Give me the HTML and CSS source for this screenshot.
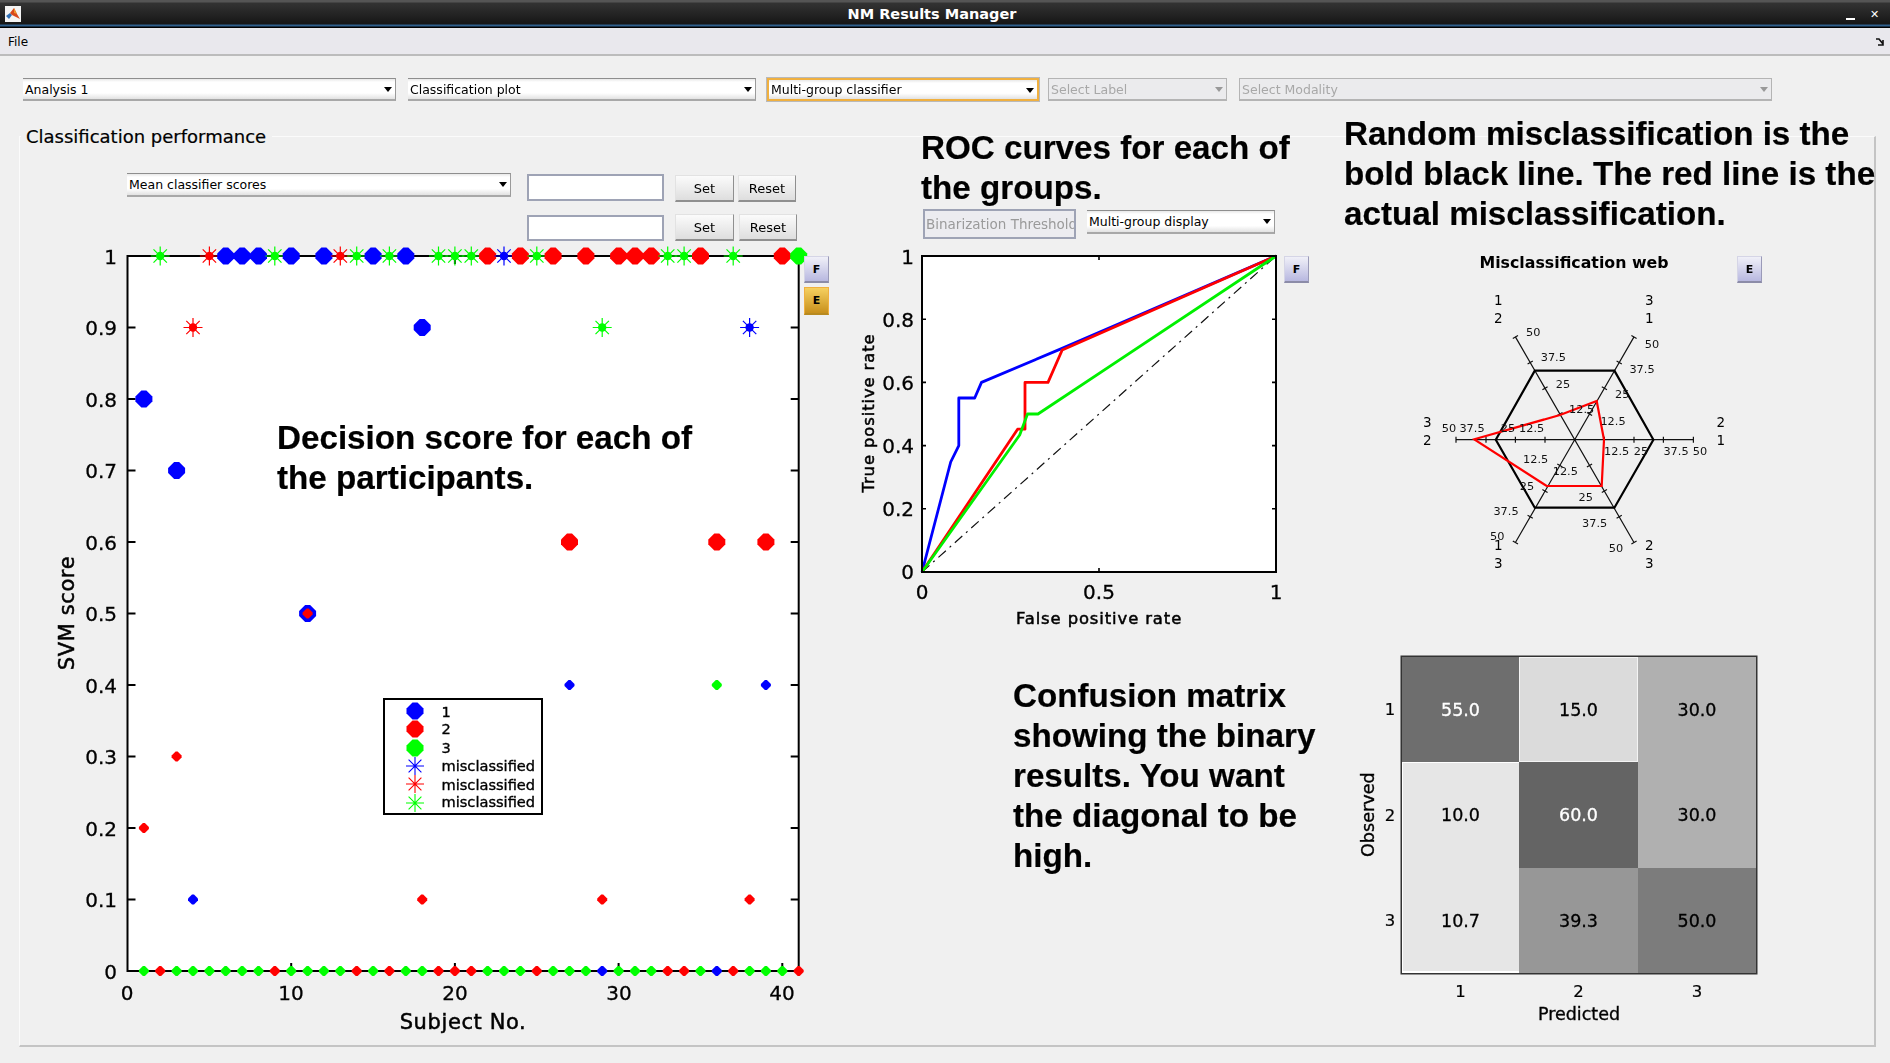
FILE: index.html
```html
<!DOCTYPE html>
<html lang="en">
<head>
    <meta charset="UTF-8">
    <meta name="viewport" content="width=device-width, initial-scale=1.0">
    <title>NM Results Manager</title>
    <link rel="stylesheet" href="styles.css">
</head>
<body>

    <div class="titlebar">
        <svg class="app-icon" width="16" height="16" viewBox="0 0 16 16">
            <rect width="16" height="16" fill="#f4f4f4"/>
            <polygon points="1,10 5,7 7,9 4,13" fill="#2f6fb5"/>
            <polygon points="5,7 9,2 12,8 15,13 11,11 7,9" fill="#d8491c"/>
            <polygon points="9,2 12,8 9,7" fill="#f0902a"/>
        </svg>
        <span class="titlebar-text">NM Results Manager</span>
        <span class="win-min"></span>
        <span class="win-close">&#x2715;</span>
    </div>

    <div class="menubar">
        <span>File</span>
        <svg class="undock" width="10" height="10" viewBox="0 0 10 10">
            <path d="M1 2 L4 2 L8 7 M8 3 L8 8 L3 8" fill="none" stroke="#111" stroke-width="1.6"/>
        </svg>
    </div>

    <div class="toolbar">
        <div class="combo w-analysis"><span>Analysis 1</span><i></i></div>
        <div class="combo w-plot"><span>Classification plot</span><i></i></div>
        <div class="combo w-multi focused"><span>Multi-group classifier</span><i></i></div>
        <div class="combo w-label disabled"><span>Select Label</span><i></i></div>
        <div class="combo w-modality disabled"><span>Select Modality</span><i></i></div>
    </div>

    <div class="panel">
        <div class="panel-title">Classification performance</div>

        <div class="note note-decision">Decision score for each of<br>the participants.</div>
        <div class="note note-roc">ROC curves for each of<br>the groups.</div>
        <div class="note note-random">Random misclassification is the<br>bold black line. The red line is the<br>actual misclassification.</div>
        <div class="note note-confusion">Confusion matrix<br>showing the binary<br>results. You want<br>the diagonal to be<br>high.</div>

        <!-- left column: scores -->
        <div class="col-scores">
            <div class="ctl-row">
                <div class="combo w-scores"><span>Mean classifier scores</span><i></i></div>
                <div class="field"></div>
                <button class="btn btn-set">Set</button>
                <button class="btn btn-reset">Reset</button>
            </div>
            <div class="ctl-row second">
                <div class="field field-b"></div>
                <button class="btn btn-set">Set</button>
                <button class="btn btn-reset">Reset</button>
            </div>
            <div class="plot-row">
                <svg class="plot" width="784" height="800" viewBox="20 245 784 800">
                    <defs>
                        <polygon id="big" points="-2.5,-8.5 2.5,-8.5 8.5,-2.5 8.5,2.5 2.5,8.5 -2.5,8.5 -8.5,2.5 -8.5,-2.5" fill="currentColor"/>
                        <polygon id="small" points="-1,-5 1,-5 5,-1 5,1 1,5 -1,5 -5,1 -5,-1" fill="currentColor"/>
                        <g id="star" stroke="currentColor" stroke-width="1.2">
                            <path d="M-9.5 0H9.5M0 -9.5V9.5M-6.7 -6.7L6.7 6.7M-6.7 6.7L6.7 -6.7"/>
                            <circle r="4.2" fill="currentColor" stroke="none"/>
                        </g>
                        <path id="star-thin" d="M-9 0H9M0 -9V9M-6.4 -6.4L6.4 6.4M-6.4 6.4L6.4 -6.4" stroke="currentColor" stroke-width="1.1"/>
                    </defs>

                    <rect x="127.5" y="256" width="671.2" height="715" fill="#fff"/>
                    <path class="axis" d="M127.5 256H798.7V971H127.5Z"/>
                    <path class="axis" d="M127.5 327.5h8M127.5 399h8M127.5 470.5h8M127.5 542h8M127.5 613.5h8M127.5 685h8M127.5 756.5h8M127.5 828h8M127.5 899.5h8"/>
                    <path class="axis" d="M798.7 327.5h-8M798.7 399h-8M798.7 470.5h-8M798.7 542h-8M798.7 613.5h-8M798.7 685h-8M798.7 756.5h-8M798.7 828h-8M798.7 899.5h-8"/>
                    <path class="axis" d="M291.2 971v-8M454.9 971v-8M618.6 971v-8M782.3 971v-8M291.2 256v8M454.9 256v8M618.6 256v8M782.3 256v8"/>

                    <g class="tick-y">
                        <text x="117" y="264">1</text>
                        <text x="117" y="335">0.9</text>
                        <text x="117" y="407">0.8</text>
                        <text x="117" y="478">0.7</text>
                        <text x="117" y="550">0.6</text>
                        <text x="117" y="621">0.5</text>
                        <text x="117" y="693">0.4</text>
                        <text x="117" y="764">0.3</text>
                        <text x="117" y="836">0.2</text>
                        <text x="117" y="907">0.1</text>
                        <text x="117" y="979">0</text>
                    </g>
                    <g class="tick-x">
                        <text x="127" y="1000">0</text>
                        <text x="291" y="1000">10</text>
                        <text x="455" y="1000">20</text>
                        <text x="619" y="1000">30</text>
                        <text x="782" y="1000">40</text>
                    </g>
                    <text class="axis-label" x="463" y="1029">Subject No.</text>
                    <text class="axis-label" transform="translate(74 613) rotate(-90)">SVM score</text>

                    <!-- score = 1 -->
                    <use href="#star" class="green" x="160.2" y="256"/>
                    <use href="#star" class="red" x="209.4" y="256"/>
                    <use href="#big" class="blue" x="225.7" y="256"/>
                    <use href="#big" class="blue" x="242.1" y="256"/>
                    <use href="#big" class="blue" x="258.5" y="256"/>
                    <use href="#star" class="green" x="274.8" y="256"/>
                    <use href="#big" class="blue" x="291.2" y="256"/>
                    <use href="#big" class="blue" x="323.9" y="256"/>
                    <use href="#star" class="red" x="340.3" y="256"/>
                    <use href="#star" class="green" x="356.7" y="256"/>
                    <use href="#big" class="blue" x="373.1" y="256"/>
                    <use href="#star" class="green" x="389.4" y="256"/>
                    <use href="#big" class="blue" x="405.8" y="256"/>
                    <use href="#star" class="green" x="438.5" y="256"/>
                    <use href="#star" class="green" x="454.9" y="256"/>
                    <use href="#star" class="green" x="471.3" y="256"/>
                    <use href="#big" class="red" x="487.6" y="256"/>
                    <use href="#star" class="blue" x="504" y="256"/>
                    <use href="#big" class="red" x="520.4" y="256"/>
                    <use href="#star" class="green" x="536.8" y="256"/>
                    <use href="#big" class="red" x="553.1" y="256"/>
                    <use href="#big" class="red" x="585.9" y="256"/>
                    <use href="#big" class="red" x="618.6" y="256"/>
                    <use href="#big" class="red" x="635" y="256"/>
                    <use href="#big" class="red" x="651.3" y="256"/>
                    <use href="#star" class="green" x="667.7" y="256"/>
                    <use href="#star" class="green" x="684.1" y="256"/>
                    <use href="#big" class="red" x="700.5" y="256"/>
                    <use href="#star" class="green" x="733.2" y="256"/>
                    <use href="#big" class="red" x="782.3" y="256"/>
                    <use href="#big" class="green" x="798.7" y="256"/>

                    <!-- scattered scores -->
                    <use href="#big" class="blue" x="143.9" y="399"/>
                    <use href="#big" class="blue" x="176.6" y="470.5"/>
                    <use href="#star" class="red" x="193" y="327.5"/>
                    <use href="#big" class="blue" x="422.2" y="327.5"/>
                    <use href="#star" class="green" x="602.2" y="327.5"/>
                    <use href="#star" class="blue" x="749.6" y="327.5"/>
                    <use href="#big" class="blue" x="307.6" y="613.5"/>
                    <use href="#small" class="red" x="307.6" y="613.5"/>
                    <use href="#big" class="red" x="569.5" y="542"/>
                    <use href="#big" class="red" x="716.8" y="542"/>
                    <use href="#big" class="red" x="765.9" y="542"/>
                    <use href="#small" class="blue" x="569.5" y="685"/>
                    <use href="#small" class="green" x="716.8" y="685"/>
                    <use href="#small" class="blue" x="765.9" y="685"/>
                    <use href="#small" class="red" x="176.6" y="756.5"/>
                    <use href="#small" class="red" x="143.9" y="828"/>
                    <use href="#small" class="blue" x="193" y="899.5"/>
                    <use href="#small" class="red" x="422.2" y="899.5"/>
                    <use href="#small" class="red" x="602.2" y="899.5"/>
                    <use href="#small" class="red" x="749.6" y="899.5"/>

                    <!-- score = 0 -->
                    <use href="#small" class="green" x="143.9" y="971"/>
                    <use href="#small" class="red" x="160.2" y="971"/>
                    <use href="#small" class="green" x="176.6" y="971"/>
                    <use href="#small" class="green" x="193" y="971"/>
                    <use href="#small" class="green" x="209.4" y="971"/>
                    <use href="#small" class="green" x="225.7" y="971"/>
                    <use href="#small" class="green" x="242.1" y="971"/>
                    <use href="#small" class="green" x="258.5" y="971"/>
                    <use href="#small" class="red" x="274.8" y="971"/>
                    <use href="#small" class="green" x="291.2" y="971"/>
                    <use href="#small" class="green" x="307.6" y="971"/>
                    <use href="#small" class="green" x="323.9" y="971"/>
                    <use href="#small" class="green" x="340.3" y="971"/>
                    <use href="#small" class="red" x="356.7" y="971"/>
                    <use href="#small" class="green" x="373.1" y="971"/>
                    <use href="#small" class="red" x="389.4" y="971"/>
                    <use href="#small" class="green" x="405.8" y="971"/>
                    <use href="#small" class="green" x="422.2" y="971"/>
                    <use href="#small" class="red" x="438.5" y="971"/>
                    <use href="#small" class="red" x="454.9" y="971"/>
                    <use href="#small" class="red" x="471.3" y="971"/>
                    <use href="#small" class="green" x="487.6" y="971"/>
                    <use href="#small" class="green" x="504" y="971"/>
                    <use href="#small" class="green" x="520.4" y="971"/>
                    <use href="#small" class="red" x="536.8" y="971"/>
                    <use href="#small" class="green" x="553.1" y="971"/>
                    <use href="#small" class="green" x="569.5" y="971"/>
                    <use href="#small" class="green" x="585.9" y="971"/>
                    <use href="#small" class="blue" x="602.2" y="971"/>
                    <use href="#small" class="green" x="618.6" y="971"/>
                    <use href="#small" class="green" x="635" y="971"/>
                    <use href="#small" class="green" x="651.3" y="971"/>
                    <use href="#small" class="red" x="667.7" y="971"/>
                    <use href="#small" class="red" x="684.1" y="971"/>
                    <use href="#small" class="green" x="700.5" y="971"/>
                    <use href="#small" class="blue" x="716.8" y="971"/>
                    <use href="#small" class="red" x="733.2" y="971"/>
                    <use href="#small" class="green" x="749.6" y="971"/>
                    <use href="#small" class="green" x="765.9" y="971"/>
                    <use href="#small" class="green" x="782.3" y="971"/>
                    <use href="#small" class="red" x="798.7" y="971"/>

                    <!-- legend -->
                    <rect class="legend-box" x="384" y="699" width="158" height="115"/>
                    <use href="#big" class="blue" x="415" y="711"/>
                    <use href="#big" class="red" x="415" y="729"/>
                    <use href="#big" class="green" x="415" y="748"/>
                    <use href="#star-thin" class="blue" x="415" y="766"/>
                    <use href="#star-thin" class="red" x="415" y="784"/>
                    <use href="#star-thin" class="green" x="415" y="803"/>
                    <g class="legend-text">
                        <text x="441.5" y="717">1</text>
                        <text x="441.5" y="734">2</text>
                        <text x="441.5" y="753">3</text>
                        <text x="441.5" y="771">misclassified</text>
                        <text x="441.5" y="790">misclassified</text>
                        <text x="441.5" y="807">misclassified</text>
                    </g>
                </svg>
                <div class="side-btns">
                    <button class="mini mini-f">F</button>
                    <button class="mini mini-e">E</button>
                </div>
            </div>
        </div>

        <!-- middle column: ROC -->
        <div class="col-roc">
            <div class="ctl-row roc-ctl">
                <div class="threshold"><span>Binarization Threshold</span></div>
                <div class="combo w-display"><span>Multi-group display</span><i></i></div>
            </div>
            <div class="plot-row">
                <svg class="plot" width="448" height="400" viewBox="836 240 448 400">
                    <rect x="922" y="256" width="354" height="316" fill="#fff"/>
                    <polyline class="roc-chance" points="922,572 1276,256"/>
                    <polyline class="roc roc-blue" points="922,572 950.7,462 958.8,445.6 958.8,398 974.7,398 981.5,382.4 1061.5,348.6 1276,256"/>
                    <polyline class="roc roc-red" points="922,572 1017.6,429.2 1025,429.2 1025,382.4 1048,382.4 1062.2,350 1276,256"/>
                    <polyline class="roc roc-green" points="922,572 1019.7,435 1027.5,414 1038,414 1276,256"/>
                    <path class="axis" d="M922 256H1276V572H922Z"/>
                    <path class="axis thin" d="M922 508.8h4M922 445.6h4M922 382.4h4M922 319.2h4M1276 508.8h-4M1276 445.6h-4M1276 382.4h-4M1276 319.2h-4M1099 572v-4M1099 256v4"/>
                    <g class="tick-y">
                        <text x="914" y="264">1</text>
                        <text x="914" y="327">0.8</text>
                        <text x="914" y="390">0.6</text>
                        <text x="914" y="453">0.4</text>
                        <text x="914" y="516">0.2</text>
                        <text x="914" y="579">0</text>
                    </g>
                    <g class="tick-x">
                        <text x="922" y="599">0</text>
                        <text x="1099" y="599">0.5</text>
                        <text x="1276" y="599">1</text>
                    </g>
                    <text class="axis-label small" x="1099" y="624">False positive rate</text>
                    <text class="axis-label small" transform="translate(874 413) rotate(-90)">True positive rate</text>
                </svg>
                <div class="side-btns roc-btns">
                    <button class="mini mini-f">F</button>
                </div>
            </div>
        </div>

        <!-- right column: web and confusion matrix -->
        <div class="col-web">
            <div class="web-head">
                <div class="web-title">Misclassification web</div>
                <button class="mini mini-f">E</button>
            </div>
            <svg class="plot" width="530" height="296" viewBox="1340 284 530 296">
                <g class="web-axes">
                    <path d="M1456 439.7H1693.4M1515.4 336.9L1634 542.5M1634 336.9L1515.4 542.5"/>
                    <path d="M1456 436.7v6M1693.4 436.7v6M1486 436.7v6M1663.4 436.7v6M1515.4 436.7v6M1634 436.7v6M1545 436.7v6M1604.4 436.7v6"/>
                    <path d="M1512.8 338.4l5.2 -3M1631.4 335.4l5.2 3M1512.8 541l5.2 3M1631.4 544l5.2 -3"/>
                    <path d="M1527.6 364.1l5.2 -3M1542.4 389.8l5.2 -3M1557.3 415.5l5.2 -3M1616.6 361.1l5.2 3M1601.8 386.8l5.2 3M1586.9 412.5l5.2 3"/>
                    <path d="M1527.6 515.3l5.2 3M1542.4 489.6l5.2 3M1557.3 463.9l5.2 3M1616.6 518.3l5.2 -3M1601.8 492.6l5.2 -3M1586.9 466.9l5.2 -3"/>
                </g>
                <polygon class="web-hex" points="1653.4,439.7 1614.4,370.7 1534.8,370.7 1495.8,439.7 1534.8,507.7 1614.4,507.7"/>
                <polygon class="web-line" points="1474.3,439.3 1560,415 1596.7,401 1604,439.7 1601.7,486 1546.7,486"/>
                <g class="web-nums">
                    <text x="1533.3" y="336">50</text>
                    <text x="1553.3" y="361">37.5</text>
                    <text x="1563" y="388">25</text>
                    <text x="1581.7" y="413">12.5</text>
                    <text x="1652" y="348">50</text>
                    <text x="1642" y="373">37.5</text>
                    <text x="1622.3" y="398">25</text>
                    <text x="1613" y="425">12.5</text>
                    <text x="1616.7" y="455">12.5</text>
                    <text x="1641" y="455">25</text>
                    <text x="1676" y="455">37.5</text>
                    <text x="1700" y="455">50</text>
                    <text x="1565.3" y="475">12.5</text>
                    <text x="1585.7" y="501">25</text>
                    <text x="1594.7" y="527">37.5</text>
                    <text x="1616" y="552">50</text>
                    <text x="1535.7" y="463">12.5</text>
                    <text x="1527" y="490">25</text>
                    <text x="1506" y="515">37.5</text>
                    <text x="1497.3" y="540">50</text>
                    <text x="1531.7" y="432">12.5</text>
                    <text x="1508" y="432">25</text>
                    <text x="1472" y="432">37.5</text>
                    <text x="1449" y="432">50</text>
                </g>
                <g class="web-groups">
                    <text x="1498.3" y="305">1</text>
                    <text x="1498.3" y="323">2</text>
                    <text x="1649.3" y="305">3</text>
                    <text x="1649.3" y="323">1</text>
                    <text x="1720.7" y="427">2</text>
                    <text x="1720.7" y="445">1</text>
                    <text x="1427.3" y="427">3</text>
                    <text x="1427.3" y="445">2</text>
                    <text x="1498.3" y="550">1</text>
                    <text x="1498.3" y="568">3</text>
                    <text x="1649.3" y="550">2</text>
                    <text x="1649.3" y="568">3</text>
                </g>
            </svg>

            <div class="matrix">
                <div class="obs-label">Observed</div>
                <div class="row-num n1">1</div>
                <div class="row-num n2">2</div>
                <div class="row-num n3">3</div>
                <div class="cells">
                    <div class="cell c55">55.0</div>
                    <div class="cell c15">15.0</div>
                    <div class="cell c30">30.0</div>
                    <div class="cell c10a">10.0</div>
                    <div class="cell c60">60.0</div>
                    <div class="cell c30">30.0</div>
                    <div class="cell c10b">10.7</div>
                    <div class="cell c39">39.3</div>
                    <div class="cell c50">50.0</div>
                </div>
                <div class="col-nums">
                    <span>1</span><span>2</span><span>3</span>
                </div>
                <div class="pred-label">Predicted</div>
            </div>
        </div>
    </div>

</body>
</html>
```

FILE: styles.css
```css
html, body{
    margin: 0;
    padding: 0;
    height: 100%;
}

body{
    width: 1890px;
    height: 1063px;
    overflow: hidden;
    background: #f0f0f0;
    color: #000;
    font-family: "DejaVu Sans", sans-serif;
    filter: blur(.35px);
}

/* window chrome */
.titlebar{
    position: relative;
    height: 28px;
    box-sizing: border-box;
    background: linear-gradient(#555 0, #555 2px, #333 3px, #161616 24px, #2f5f8c 25px, #2f5f8c 26px, #000 27px);
    display: flex;
    align-items: center;
    padding-left: 5px;
}

.app-icon{
    flex: none;
}

.titlebar-text{
    position: absolute;
    left: 0;
    right: 26px;
    top: 4px;
    text-align: center;
    color: #fff;
    font-size: 14.5px;
    font-weight: bold;
    line-height: 20px;
}

.win-min{
    position: absolute;
    left: 1846px;
    top: 18px;
    width: 9px;
    height: 2px;
    background: #fff;
}

.win-close{
    position: absolute;
    left: 1870px;
    top: 6px;
    color: #fff;
    font-size: 11px;
    line-height: 18px;
    font-weight: bold;
}

.menubar{
    height: 25px;
    background: #e9e8ed;
    border-bottom: 2px solid #bcbcbc;
    display: flex;
    align-items: center;
    justify-content: space-between;
    padding: 1px 5px 0 8px;
    box-sizing: content-box;
    font-size: 12px;
}

/* dropdowns across the top */
.toolbar{
    display: flex;
    padding: 22px 0 0 23px;
    height: 80px;
    box-sizing: border-box;
}

.combo{
    position: relative;
    height: 23px;
    box-sizing: border-box;
    display: flex;
    align-items: center;
    padding-left: 2px;
    font-size: 12.5px;
    background: linear-gradient(#e8e8e8 0, #fff 3px, #fff 70%, #e2e2e2);
    border-top: 1px solid #8e8e8e;
    border-bottom: 2px solid #a8a8a8;
    border-right: 1px solid #9a9a9a;
    white-space: nowrap;
    flex: none;
}

.combo i{
    position: absolute;
    right: 3px;
    top: 8px;
    border-left: 4.5px solid transparent;
    border-right: 4.5px solid transparent;
    border-top: 5px solid #000;
}

.combo.focused{
    border: 2px solid #f0b040;
    outline: 1px solid #b9b9b9;
}

.combo.disabled{
    background: #ebebed;
    color: #a8a8a8;
    border: 1px solid #b4b4b4;
    border-bottom-width: 2px;
}

.combo.disabled i{
    border-top-color: #999;
}

.w-analysis{ width: 373px; }
.w-plot{ width: 348px; margin-left: 12px; }
.w-multi{ width: 272px; margin-left: 11px; }
.w-label{ width: 179px; margin-left: 9px; }
.w-modality{ width: 533px; margin-left: 12px; }
.w-scores{ width: 384px; height: 24px; }
.w-display{ width: 188px; height: 24px; margin: 1px 0 0 11px; }

/* main panel */
.panel{
    position: relative;
    width: 1857px;
    height: 911px;
    box-sizing: border-box;
    margin-left: 19px;
    border: 1px solid #fbfbfb;
    border-right: 2px solid #c4c4c4;
    border-bottom: 2px solid #c4c4c4;
    display: grid;
    grid-template-columns: 816px 504px 1fr;
}

.panel-title{
    position: absolute;
    left: 1px;
    top: -12px;
    padding: 0 6px 0 5px;
    background: #f0f0f0;
    font-size: 18px;
    line-height: 24px;
    -webkit-text-stroke: .2px #000;
}

/* callouts typed over the figure */
.note{
    position: absolute;
    z-index: 2;
    font-family: "Liberation Sans", Arial, sans-serif;
    font-weight: bold;
    font-size: 33.2px;
    line-height: 40px;
    white-space: nowrap;
    -webkit-text-stroke: .2px #000;
}

.note-decision{ left: 257px; top: 281px; }
.note-roc{ left: 901px; top: -9px; }
.note-random{ left: 1324px; top: -23px; }
.note-confusion{ left: 993px; top: 539px; }

.col-scores{
    padding-top: 36px;
}

.col-roc{
    padding-top: 72px;
}

.col-web{
    padding-top: 119px;
}

.ctl-row{
    display: flex;
    align-items: flex-start;
    height: 28px;
    margin-left: 107px;
}

.ctl-row.second{
    margin-top: 13px;
    padding-left: 384px;
}

.roc-ctl{
    height: 31px;
    margin-left: 87px;
}

.field{
    width: 137px;
    height: 27px;
    box-sizing: border-box;
    margin: 1px 0 0 16px;
    background: #fff;
    border: 2px solid #9ea3b5;
    flex: none;
}

.field-b{
    height: 26px;
}

.btn{
    height: 27px;
    box-sizing: border-box;
    margin: 2px 0 0 11px;
    padding: 0;
    width: 59px;
    font-family: inherit;
    font-size: 13px;
    background: linear-gradient(#fbfbfb, #dedede);
    border: 1px solid #e2e2e2;
    border-right-color: #8f8f8f;
    border-bottom: 2px solid #8f8f8f;
    flex: none;
}

.btn-reset{
    width: 58px;
    margin-left: 4px;
}

.second .btn{
    margin-top: 0;
}

.second .btn-reset{
    margin-left: 5px;
}

.threshold{
    width: 153px;
    height: 30px;
    box-sizing: border-box;
    border: 2px solid #9ea3b5;
    background: #ececf0;
    color: #9a9a9a;
    font-size: 13.5px;
    line-height: 26px;
    padding-left: 1px;
    white-space: nowrap;
    overflow: hidden;
    flex: none;
}

.plot-row{
    display: flex;
    align-items: flex-start;
    margin-top: 3px;
}

.roc-ctl + .plot-row{
    margin-top: 0;
}

.plot{
    display: block;
    overflow: visible;
    flex: none;
}

.side-btns{
    display: flex;
    flex-direction: column;
    gap: 4px;
    padding-top: 11px;
    position: relative;
    z-index: 1;
}

.roc-btns{
    padding-top: 16px;
}

.mini{
    width: 25px;
    height: 28px;
    box-sizing: border-box;
    padding: 0;
    font-family: inherit;
    font-size: 11px;
    font-weight: bold;
    border: 1px solid #d5d5e6;
    border-right-color: #9a9ab8;
    border-bottom: 2px solid #8c8ca8;
    background: linear-gradient(#f0f0f8, #b8b8e0);
}

.mini-f{
    height: 27px;
}

.mini-e{
    background: linear-gradient(#f6d060, #c8901c);
    border: 1px solid #f0b040;
    border-bottom: 2px solid #b88a20;
}

/* plot parts */
.axis{
    fill: none;
    stroke: #000;
    stroke-width: 2;
}

.axis.thin{
    stroke-width: 1.6;
}

.blue{ color: #0000ff; }
.red{ color: #ff0000; }
.green{ color: #00ff00; }

.tick-y text{
    font-size: 20px;
    text-anchor: end;
    stroke: #000;
    stroke-width: .3;
}

.tick-x text{
    font-size: 20px;
    text-anchor: middle;
    stroke: #000;
    stroke-width: .3;
}

.axis-label{
    font-size: 21px;
    text-anchor: middle;
    stroke: #000;
    stroke-width: .5;
    letter-spacing: .6px;
}

.axis-label.small{
    font-size: 16.4px;
    stroke-width: .5;
    letter-spacing: .9px;
}

.legend-box{
    fill: #fff;
    stroke: #000;
    stroke-width: 2;
}

.legend-text text{
    font-size: 14.6px;
    stroke: #000;
    stroke-width: .35;
}

.roc{
    fill: none;
    stroke-width: 2.8;
    stroke-linejoin: round;
}

.roc-blue{ stroke: #0000ff; }
.roc-red{ stroke: #ff0000; }
.roc-green{ stroke: #00f000; }

.roc-chance{
    stroke: #111;
    stroke-width: 1.2;
    stroke-dasharray: 10 5 2 5;
    fill: none;
}

.web-head{
    display: flex;
    align-items: flex-start;
    height: 28px;
    margin-left: 134px;
}

.web-title{
    width: 200px;
    margin-right: 63px;
    text-align: center;
    font-size: 15.8px;
    line-height: 14px;
    font-weight: bold;
    white-space: nowrap;
}

.web-axes path{
    fill: none;
    stroke: #111;
    stroke-width: 1.2;
}

.web-hex{
    fill: none;
    stroke: #000;
    stroke-width: 2.2;
}

.web-line{
    fill: none;
    stroke: #ff0000;
    stroke-width: 2.2;
}

.web-nums text{
    font-size: 11.3px;
    text-anchor: middle;
    fill: #111;
}

.web-groups text{
    font-size: 13.5px;
    text-anchor: middle;
}

/* confusion matrix */
.matrix{
    display: grid;
    grid-template-columns: 38px 24px 354px;
    grid-template-rows: 105px 106px 105px 30px 20px;
    width: 416px;
    margin-top: 77px;
}

.obs-label{
    grid-column: 1;
    grid-row: 1 / 4;
    writing-mode: vertical-rl;
    transform: rotate(180deg);
    text-align: center;
    font-size: 17.6px;
    line-height: 20px;
    width: 20px;
    margin-left: 18px;
    -webkit-text-stroke: .35px #000;
}

.row-num{
    grid-column: 2;
    align-self: center;
    text-align: center;
    font-size: 16.5px;
    -webkit-text-stroke: .2px #000;
}

.n1{ grid-row: 1; }
.n2{ grid-row: 2; }
.n3{ grid-row: 3; }

.cells{
    grid-column: 3;
    grid-row: 1 / 4;
    display: grid;
    grid-template-columns: 117px 119px 118px;
    grid-template-rows: 105px 106px 105px;
    box-shadow: 0 0 0 1.5px #333;
}

.cell{
    display: flex;
    align-items: center;
    justify-content: center;
    font-size: 17.5px;
    -webkit-text-stroke: .3px currentColor;
}

.c55{ background: #6e6e6e; color: #fff; }
.c15{ background: #dbdbdb; box-shadow: inset 0 0 0 1px #f4f4f4; }
.c30{ background: #b0b0b0; }
.c10a{ background: #e6e6e6; box-shadow: inset 1px 1px 0 #fff; }
.c60{ background: #646464; color: #fff; }
.c10b{ background: #e6e6e6; box-shadow: inset 1px -2px 0 #fff; }
.c39{ background: #979797; }
.c50{ background: #7c7c7c; }

.col-nums{
    grid-column: 3;
    grid-row: 4;
    display: grid;
    grid-template-columns: 117px 119px 118px;
    align-items: center;
    padding-top: 6px;
    text-align: center;
    font-size: 16.5px;
    -webkit-text-stroke: .2px #000;
}

.pred-label{
    grid-column: 3;
    grid-row: 5;
    text-align: center;
    font-size: 17.5px;
    line-height: 22px;
    -webkit-text-stroke: .35px #000;
}
```
